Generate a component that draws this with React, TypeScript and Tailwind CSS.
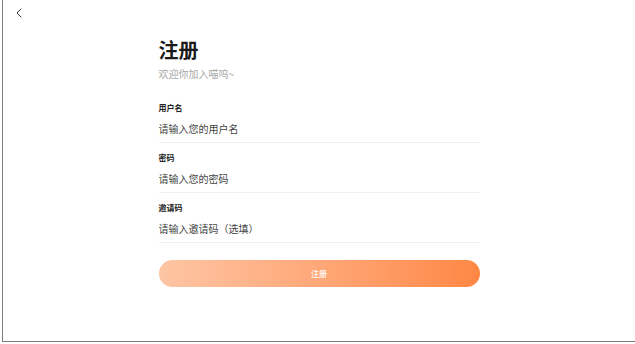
import React from "react"

const font = { fontFamily: '"Noto Sans CJK SC", "Noto Sans", sans-serif' }

function Field({ label, placeholder }: { label: string; placeholder: string }) {
  return (
    <div className="flex flex-col">
      <label className="text-[8px] font-bold leading-[12px] text-[#222]">{label}</label>
      <input
        className="mt-[7px] h-[16px] border-0 bg-transparent p-0 text-[10px] leading-[16px] text-[#333] outline-none placeholder:text-[#444]"
        placeholder={placeholder}
      />
      <div className="mt-[5px] h-px bg-[#f0f0f0]" />
    </div>
  )
}

export default function App() {
  return (
    <div className="h-[344px] w-[635px] bg-white" style={font}>
      <div className="ml-[2px] flex h-[342px] flex-col border-b border-l border-[#7a7a7a] bg-white">
        <div className="flex h-[24px] items-center pl-[11px] pt-[1px]">
          <button className="flex h-[12px] w-[10px] items-center justify-center text-[#333]">
            <svg width="6" height="10" viewBox="0 0 6 10" fill="none">
              <path d="M5 1L1 5L5 9" stroke="#333" strokeWidth="1" strokeLinecap="round" strokeLinejoin="round" />
            </svg>
          </button>
        </div>

        <div className="mx-auto mt-[12px] flex w-[321px] flex-col">
          <h1 className="text-[20px] font-bold leading-[28px] text-[#1a1a1a]">注册</h1>
          <p className="mt-[3px] text-[10px] leading-[14px] text-[#a8a8a8]">欢迎你加入喵呜~</p>

          <div className="mt-[21px] flex flex-col gap-[9px]">
            <Field label="用户名" placeholder="请输入您的用户名" />
            <Field label="密码" placeholder="请输入您的密码" />
            <Field label="邀请码" placeholder="请输入邀请码（选填）" />
          </div>

          <button className="mt-[17px] h-[27px] w-full rounded-full bg-gradient-to-r from-[#fdc5a4] to-[#ff8744] text-[8px] font-medium text-white">
            注册
          </button>
        </div>
      </div>
    </div>
  )
}
